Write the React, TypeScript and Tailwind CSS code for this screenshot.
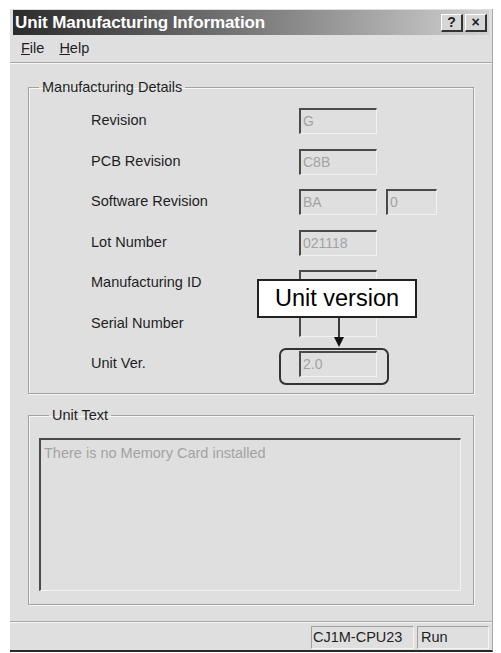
import React from "react"

const rows = [
  { label: "Revision", values: ["G"] },
  { label: "PCB Revision", values: ["C8B"] },
  { label: "Software Revision", values: ["BA", "0"] },
  { label: "Lot Number", values: ["021118"] },
  { label: "Manufacturing ID", values: [""] },
  { label: "Serial Number", values: [""] },
  { label: "Unit Ver.", values: ["2.0"] },
]

// sunken, disabled edit box
function Field({ value, wide }: { value: string; wide: boolean }) {
  return (
    <div
      className={`${wide ? "w-[78px]" : "w-[51px]"} h-[26px] border-t-2 border-l-2 border-t-[#4a4a4a] border-l-[#4a4a4a] border-r border-b border-r-[#f2f2f2] border-b-[#f2f2f2] pl-[2px] text-[14px] leading-[22px] text-[#a3a3a3]`}
    >
      {value}
    </div>
  )
}

export default function App() {
  return (
    <div className="w-[501px] h-[653px] bg-white pt-[9px] pl-[10px] font-['Liberation_Sans',Arial,sans-serif] text-[#1e1e1e]">
      <div className="w-[483px] h-[643px] bg-[#dfdfdf] border-r border-r-[#a8a8a8] border-b-2 border-b-[#2a2a2a] flex flex-col">
        {/* title bar */}
        <div className="mx-[3px] mt-[1px] h-[25px] bg-linear-to-r from-[#2c2c2c] via-[#7a7a7a] to-[#d2d2d2] flex items-center pl-[2px] pr-[2px]">
          <span className="text-white font-bold text-[17px] tracking-[-0.1px]">Unit Manufacturing Information</span>
          <div className="ml-auto flex gap-[2px]">
            <div className="w-[22px] h-[18px] bg-[#d6d6d6] border-t border-l border-t-white border-l-white border-r-2 border-b-2 border-r-[#333] border-b-[#333] flex items-center justify-center font-bold text-[14px] leading-none">
              ?
            </div>
            <div className="w-[22px] h-[18px] bg-[#d6d6d6] border-t border-l border-t-white border-l-white border-r-2 border-b-2 border-r-[#333] border-b-[#333] flex items-center justify-center font-bold text-[14px] leading-none">
              ×
            </div>
          </div>
        </div>

        {/* menu bar */}
        <div className="h-[27px] flex items-center gap-[15px] pl-[11px] text-[14.5px]">
          <span>
            <span className="underline">F</span>ile
          </span>
          <span>
            <span className="underline">H</span>elp
          </span>
        </div>
        <div className="border-t border-t-[#a6a6a6] border-b border-b-[#f6f6f6]" />

        <div className="px-[18px]">
          {/* Manufacturing Details */}
          <fieldset className="relative mt-[15px] border border-[#a2a2a2] shadow-[inset_1px_1px_0_#f6f6f6,1px_1px_0_#f6f6f6] pt-[12px] pb-[16px]">
            <legend className="ml-[10px] px-[3px] text-[14.5px] leading-[17px]">Manufacturing Details</legend>
            <div className="flex flex-col gap-[14.5px]">
              {rows.map((row) => (
                <div key={row.label} className="flex items-center h-[26px]">
                  <div className="w-[270px] pl-[62px] text-[14.5px]">{row.label}</div>
                  <div className="flex gap-[9px]">
                    {row.values.map((v, i) => (
                      <Field key={i} value={v} wide={i === 0} />
                    ))}
                  </div>
                </div>
              ))}
            </div>

            {/* callout */}
            <div className="absolute left-[228px] top-[183px] w-[160px] h-[39px] bg-white border-2 border-[#222] flex items-center justify-center text-[23.5px] text-black">
              Unit version
            </div>
            <svg className="absolute left-[304px] top-[222px]" width="12" height="30" viewBox="0 0 12 30">
              <line x1="6" y1="0" x2="6" y2="20" stroke="#111" strokeWidth="1.6" />
              <polygon points="1,19 11,19 6,29" fill="#111" />
            </svg>
            <div className="absolute left-[250px] top-[252px] w-[110px] h-[37px] rounded-[7px] border-2 border-[#333]" />
          </fieldset>

          {/* Unit Text */}
          <fieldset className="mt-[13px] border border-[#a2a2a2] shadow-[inset_1px_1px_0_#f6f6f6,1px_1px_0_#f6f6f6] pt-[14px] pb-[13px] pl-[10px] pr-[12px]">
            <legend className="ml-[10px] px-[3px] text-[14.5px] leading-[17px]">Unit Text</legend>
            <div className="h-[153px] border-t-2 border-l-2 border-t-[#4a4a4a] border-l-[#4a4a4a] border-r border-b border-r-[#f2f2f2] border-b-[#f2f2f2] pl-[3px] pt-[3px] text-[14.5px] text-[#a3a3a3]">
              There is no Memory Card installed
            </div>
          </fieldset>
        </div>

        {/* status bar */}
        <div className="mt-auto border-t border-t-[#a6a6a6] border-b border-b-[#f6f6f6]" />
        <div className="mt-[3px] mb-[1px] h-[23px] flex justify-end gap-[3px] pr-[3px] text-[14.5px]">
          <div className="w-[103px] border-t border-l border-t-[#a0a0a0] border-l-[#a0a0a0] border-b border-r border-b-[#f4f4f4] border-r-[#f4f4f4] pl-[1px] leading-[21px]">
            CJ1M-CPU23
          </div>
          <div className="w-[72px] border-t border-l border-t-[#a0a0a0] border-l-[#a0a0a0] border-b border-r border-b-[#f4f4f4] border-r-[#f4f4f4] pl-[3px] leading-[21px]">
            Run
          </div>
        </div>
      </div>
    </div>
  )
}
